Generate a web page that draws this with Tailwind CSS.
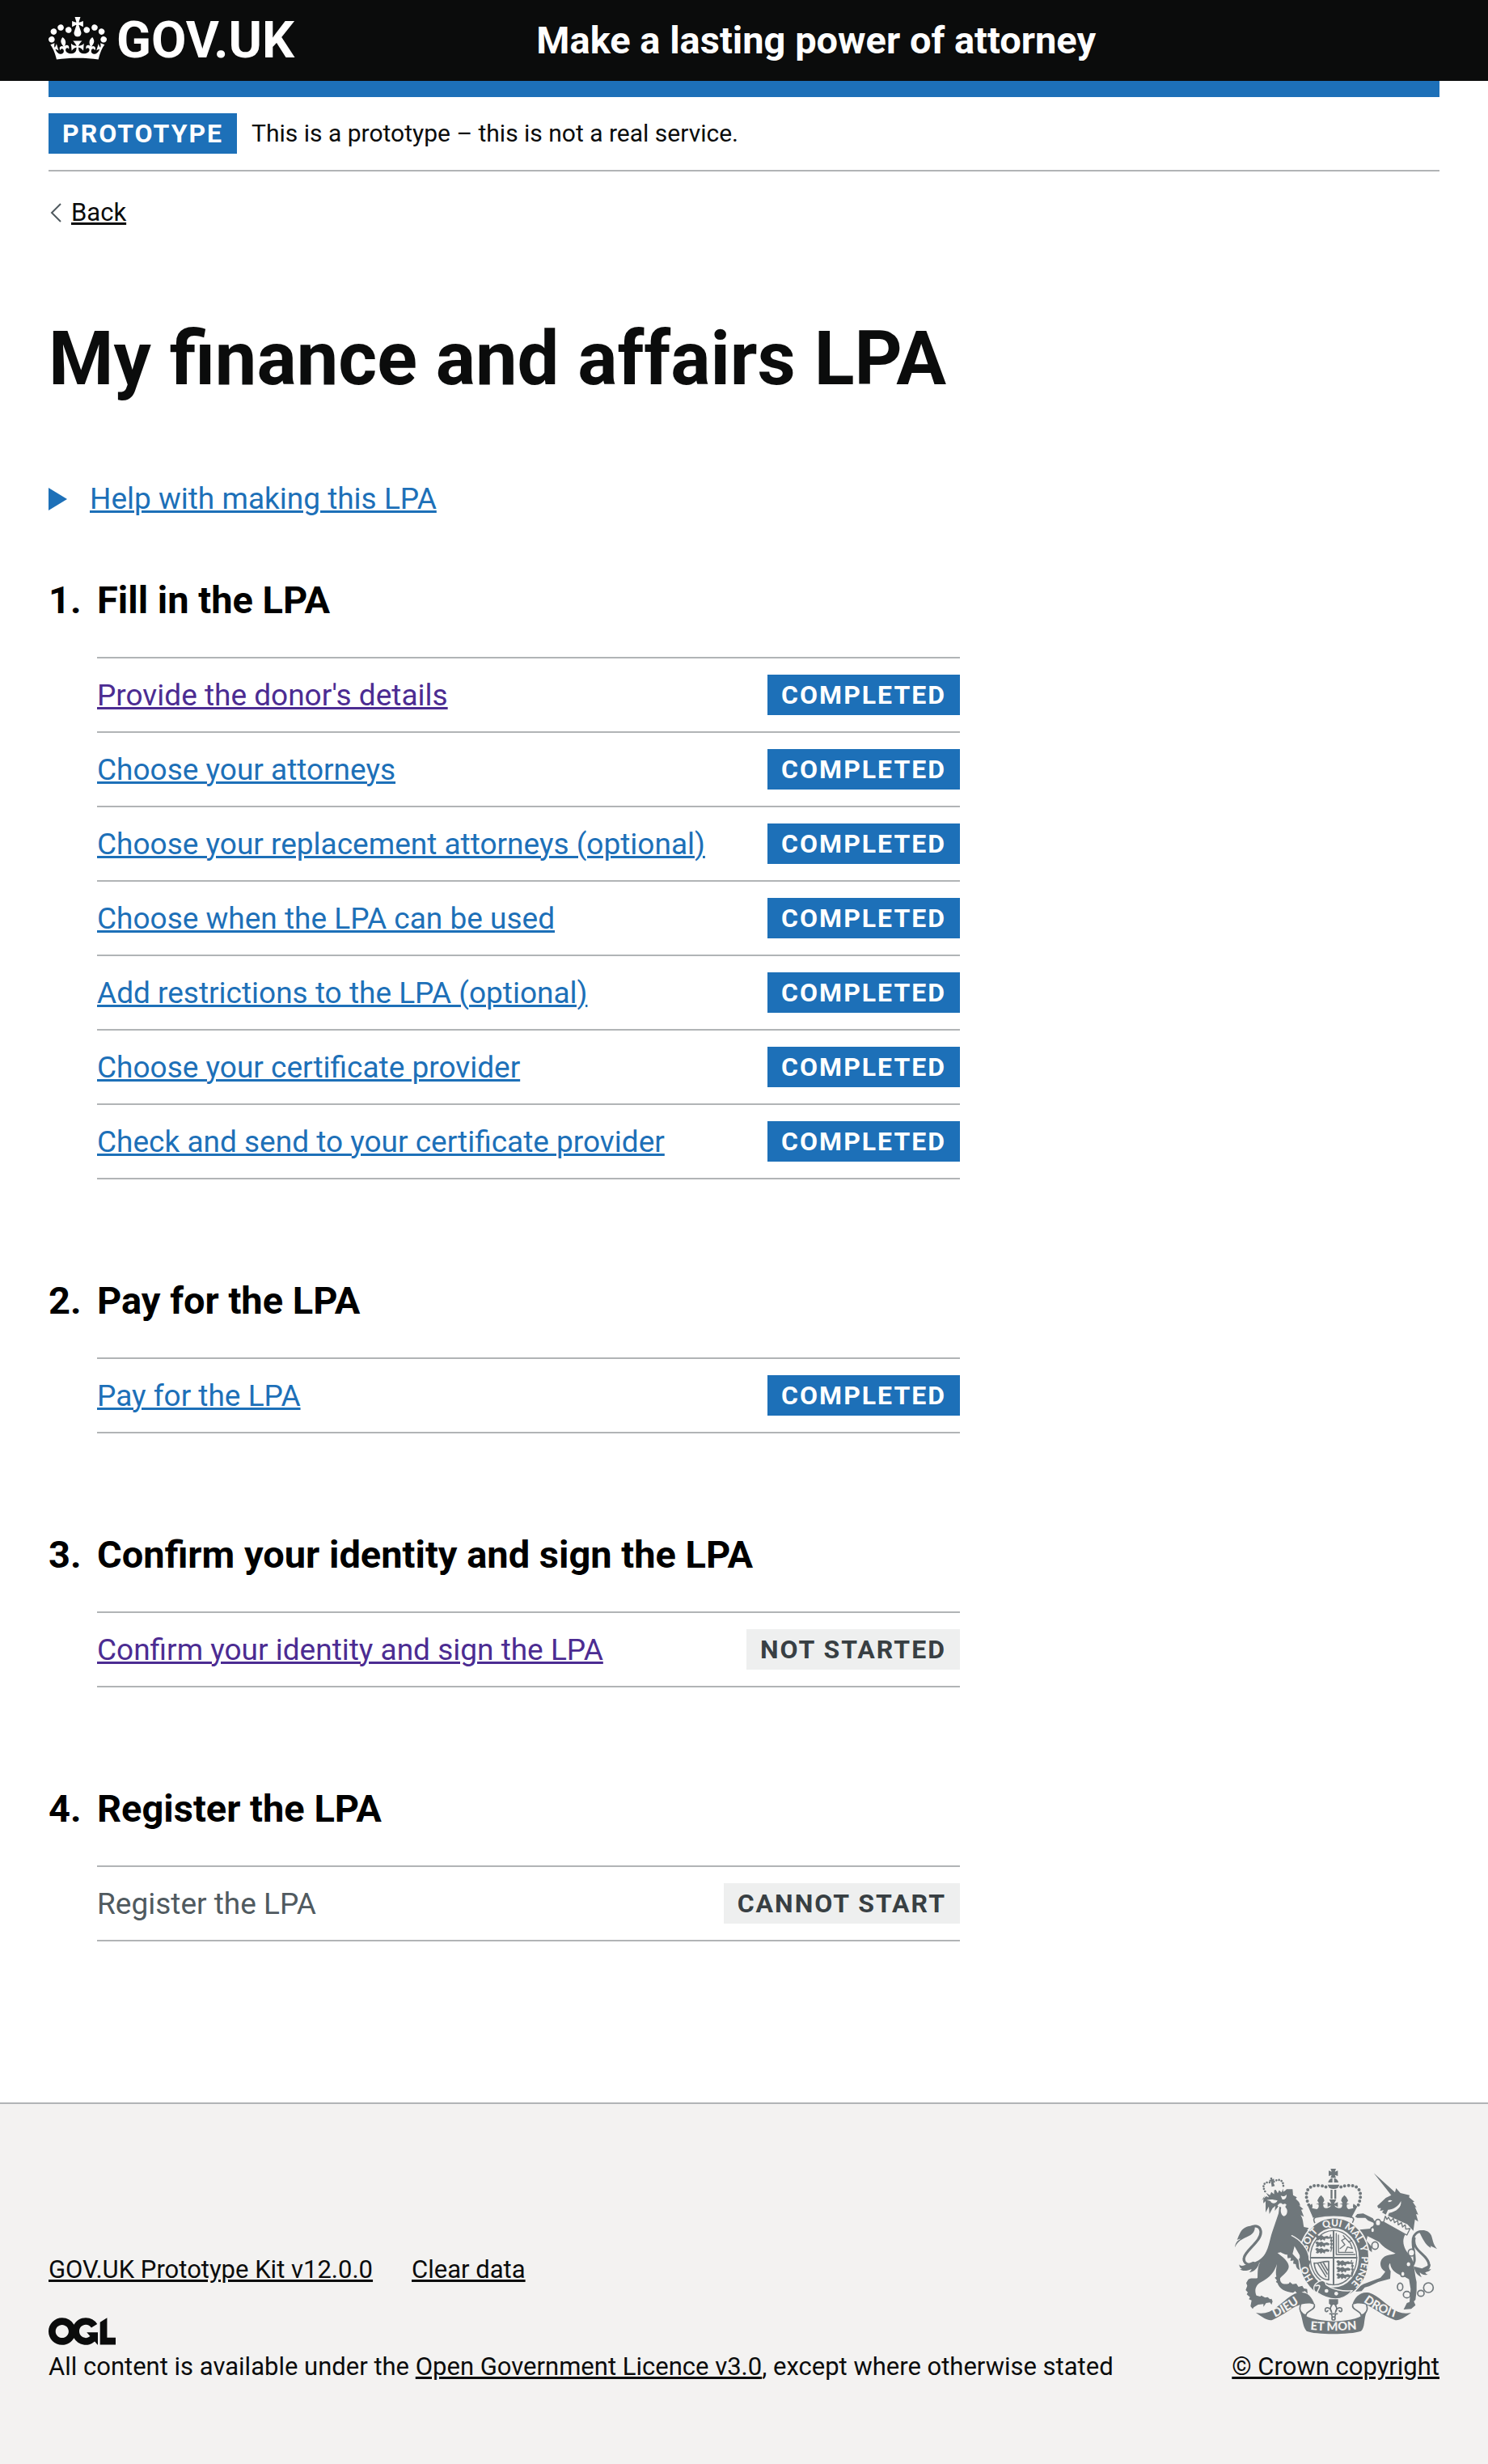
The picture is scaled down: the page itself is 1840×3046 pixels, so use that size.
<!DOCTYPE html>
<html lang="en">
<head>
<meta charset="utf-8">
<meta name="viewport" content="width=device-width, initial-scale=1">
<title>My finance and affairs LPA - Make a lasting power of attorney</title>
<script src="https://cdn.jsdelivr.net/npm/@tailwindcss/browser@4"></script>
</head>
<body class="flex min-h-screen flex-col bg-white font-[Roboto,sans-serif] text-[31px] leading-[42px] text-[#0b0c0c]">

<header class="bg-[#0b0c0c] text-white">
  <div class="mx-auto max-w-[1920px] px-[60px]">
    <div class="flex min-h-[100px] items-start pt-[21px]">
      <a href="#" class="flex w-1/3 items-start gap-3 text-[63px] leading-[58px] font-bold">
        <svg class="h-[53px] w-[72px] shrink-0" viewBox="0 0 132 97" aria-hidden="true"><path fill="currentColor" fill-rule="evenodd" d="M25 30.2c3.5 1.5 7.7-.2 9.1-3.7 1.5-3.6-.2-7.8-3.9-9.2-3.6-1.4-7.6.3-9.1 3.9-1.4 3.5.3 7.5 3.9 9zM9 39.5c3.6 1.5 7.8-.2 9.2-3.7 1.5-3.6-.2-7.8-3.9-9.1-3.6-1.5-7.6.2-9.1 3.8-1.4 3.5.3 7.5 3.8 9zM4.4 57.2c3.5 1.5 7.7-.2 9.1-3.8 1.5-3.6-.2-7.7-3.9-9.1-3.5-1.5-7.6.3-9.1 3.8-1.4 3.5.3 7.6 3.9 9.1zm38.3-21.4c3.5 1.5 7.7-.2 9.1-3.8 1.5-3.6-.2-7.7-3.9-9.1-3.6-1.5-7.6.3-9.1 3.8-1.3 3.6.4 7.7 3.9 9.1zm64.4-5.6c-3.6 1.5-7.8-.2-9.1-3.7-1.5-3.6.2-7.8 3.8-9.2 3.6-1.4 7.7.3 9.2 3.9 1.3 3.5-.4 7.5-3.9 9zm15.9 9.3c-3.6 1.5-7.7-.2-9.1-3.7-1.5-3.6.2-7.8 3.7-9.1 3.6-1.5 7.7.2 9.2 3.8 1.5 3.5-.3 7.5-3.8 9zm4.7 17.7c-3.6 1.5-7.8-.2-9.2-3.8-1.5-3.6.2-7.7 3.9-9.1 3.6-1.5 7.7.3 9.2 3.8 1.3 3.5-.4 7.6-3.9 9.1zM89.3 35.8c-3.6 1.5-7.8-.2-9.2-3.8-1.4-3.6.2-7.7 3.9-9.1 3.6-1.5 7.7.3 9.2 3.8 1.4 3.6-.3 7.7-3.9 9.1zM69.7 17.7l8.9 4.7V9.3l-8.9 2.8c-.2-.3-.5-.6-.9-.9L72.4 0H59.6l3.5 11.2c-.3.3-.6.5-.9.9l-8.8-2.8v13.1l8.8-4.7c.3.3.6.7.9.9l-5 15.4v.1c-.2.8-.4 1.6-.4 2.4 0 4.1 3.1 7.5 7 8.1h.2c.3 0 .7.1 1 .1.4 0 .7 0 1-.1h.2c4-.6 7.1-4.1 7.1-8.1 0-.8-.1-1.7-.4-2.4V34l-5.1-15.4c.4-.2.7-.6 1-.9zM66 92.8c16.9 0 32.8 1.1 47.1 3.2 4-16.9 8.9-26.7 14-33.5l-9.6-3.4c1 4.9 1.1 7.2 0 10.2-1.5-1.4-3-4.3-4.2-8.7L108.6 76c2.8-2 5-3.2 7.5-3.3-4.4 9.4-10 11.9-13.6 11.2-4.3-.8-6.3-4.6-5.6-7.9 1-4.7 5.7-5.9 8-.5 4.3-8.7-3-11.4-7.6-8.8 7.1-7.2 7.9-13.5 2.1-21.1-8 6.1-8.1 12.3-4.5 20.8-4.7-5.4-12.1-2.5-9.5 6.2 3.4-5.2 7.9-2 7.2 3.1-.6 4.3-6.4 7.8-13.5 7.2-10.3-.9-10.9-8-11.2-13.8 2.5-.5 7.1 1.8 11 7.3L80.2 60c-4.1 4.4-8 5.3-12.3 5.4 1.4-4.4 8-11.6 8-11.6H55.5s6.4 7.2 7.9 11.6c-4.2-.1-8-1-12.3-5.4l1.4 16.4c3.9-5.5 8.5-7.7 10.9-7.3-.3 5.8-.9 12.8-11.1 13.8-7.2.6-12.9-2.9-13.5-7.2-.7-5 3.8-8.3 7.1-3.1 2.7-8.7-4.6-11.6-9.4-6.2 3.7-8.5 3.6-14.7-4.6-20.8-5.8 7.6-5 13.9 2.2 21.1-4.7-2.6-11.9.1-7.7 8.8 2.3-5.5 7.1-4.2 8.1.5.7 3.3-1.3 7.1-5.7 7.9-3.5.7-9-1.8-13.5-11.2 2.5.1 4.7 1.3 7.5 3.3l-4.7-15.4c-1.2 4.4-2.7 7.2-4.3 8.7-1.1-3-.9-5.3 0-10.2l-9.5 3.4c5 6.9 9.9 16.7 14 33.5 14.8-2.1 30.8-3.2 47.7-3.2z"/></svg>
        <span>GOV.UK</span>
      </a>
      <a href="#" class="pl-[30px] text-[47px] leading-[58px] font-bold">Make a lasting power of attorney</a>
    </div>
  </div>
</header>

<div class="mx-auto w-full max-w-[1920px] px-[60px]">
  <div class="h-5 bg-[#1d70b8]"></div>
  <div class="flex items-center gap-[18px] border-b-2 border-[#b1b4b6] py-5">
    <strong class="bg-[#1d70b8] px-[17px] text-[32px] leading-[50px] font-bold tracking-[2px] text-white">PROTOTYPE</strong>
    <span class="text-[30px]">This is a prototype – this is not a real service.</span>
  </div>
  <a href="#" class="mt-[33px] flex w-fit items-center leading-9">
    <svg class="mr-[12px] ml-[2px] h-6 w-[14px]" viewBox="0 0 14 24" fill="none" stroke="#505a5f" stroke-width="2" aria-hidden="true"><path d="M13 1 2 12l11 11"/></svg>
    <span class="underline decoration-[3px] underline-offset-2">Back</span>
  </a>

  <main class="max-w-[1127px]">
    <h1 class="mt-[113px] text-[92px] leading-[100px] font-bold">My finance and affairs LPA</h1>

    <details class="mt-[98px]">
      <summary class="flex w-fit cursor-pointer list-none items-center gap-7 text-[37px] leading-[50px] text-[#1d70b8]">
        <svg class="h-7 w-[23px]" viewBox="0 0 23 28" fill="currentColor" aria-hidden="true"><path d="M0 0l23 14L0 28z"/></svg>
        <span class="underline decoration-[3px] underline-offset-2">Help with making this LPA</span>
      </summary>
      <p>Get help with making this LPA.</p>
    </details>

    <ol class="mt-[75px] flex flex-col gap-[125px]">
      <li>
        <h2 class="flex text-[47px] leading-[50px] font-bold text-black"><span class="w-[60px]">1.</span>Fill in the LPA</h2>
        <ul class="mt-[45px] ml-[60px] border-t-2 border-[#b1b4b6] text-[37px] text-[#1d70b8]">
          <li class="flex items-center justify-between border-b-2 border-[#b1b4b6] py-5"><a href="#" class="pt-[2px] text-[#4c2c92] underline decoration-[3px] underline-offset-2">Provide the donor's details</a><strong class="bg-[#1d70b8] px-[17px] text-[32px] leading-[50px] font-bold tracking-[2px] text-white">COMPLETED</strong></li>
          <li class="flex items-center justify-between border-b-2 border-[#b1b4b6] py-5"><a href="#" class="pt-[2px] underline decoration-[3px] underline-offset-2">Choose your attorneys</a><strong class="bg-[#1d70b8] px-[17px] text-[32px] leading-[50px] font-bold tracking-[2px] text-white">COMPLETED</strong></li>
          <li class="flex items-center justify-between border-b-2 border-[#b1b4b6] py-5"><a href="#" class="pt-[2px] underline decoration-[3px] underline-offset-2">Choose your replacement attorneys (optional)</a><strong class="bg-[#1d70b8] px-[17px] text-[32px] leading-[50px] font-bold tracking-[2px] text-white">COMPLETED</strong></li>
          <li class="flex items-center justify-between border-b-2 border-[#b1b4b6] py-5"><a href="#" class="pt-[2px] underline decoration-[3px] underline-offset-2">Choose when the LPA can be used</a><strong class="bg-[#1d70b8] px-[17px] text-[32px] leading-[50px] font-bold tracking-[2px] text-white">COMPLETED</strong></li>
          <li class="flex items-center justify-between border-b-2 border-[#b1b4b6] py-5"><a href="#" class="pt-[2px] underline decoration-[3px] underline-offset-2">Add restrictions to the LPA (optional)</a><strong class="bg-[#1d70b8] px-[17px] text-[32px] leading-[50px] font-bold tracking-[2px] text-white">COMPLETED</strong></li>
          <li class="flex items-center justify-between border-b-2 border-[#b1b4b6] py-5"><a href="#" class="pt-[2px] underline decoration-[3px] underline-offset-2">Choose your certificate provider</a><strong class="bg-[#1d70b8] px-[17px] text-[32px] leading-[50px] font-bold tracking-[2px] text-white">COMPLETED</strong></li>
          <li class="flex items-center justify-between border-b-2 border-[#b1b4b6] py-5"><a href="#" class="pt-[2px] underline decoration-[3px] underline-offset-2">Check and send to your certificate provider</a><strong class="bg-[#1d70b8] px-[17px] text-[32px] leading-[50px] font-bold tracking-[2px] text-white">COMPLETED</strong></li>
        </ul>
      </li>
      <li>
        <h2 class="flex text-[47px] leading-[50px] font-bold text-black"><span class="w-[60px]">2.</span>Pay for the LPA</h2>
        <ul class="mt-[45px] ml-[60px] border-t-2 border-[#b1b4b6] text-[37px] text-[#1d70b8]">
          <li class="flex items-center justify-between border-b-2 border-[#b1b4b6] py-5"><a href="#" class="pt-[2px] underline decoration-[3px] underline-offset-2">Pay for the LPA</a><strong class="bg-[#1d70b8] px-[17px] text-[32px] leading-[50px] font-bold tracking-[2px] text-white">COMPLETED</strong></li>
        </ul>
      </li>
      <li>
        <h2 class="flex text-[47px] leading-[50px] font-bold text-black"><span class="w-[60px]">3.</span>Confirm your identity and sign the LPA</h2>
        <ul class="mt-[45px] ml-[60px] border-t-2 border-[#b1b4b6] text-[37px] text-[#1d70b8]">
          <li class="flex items-center justify-between border-b-2 border-[#b1b4b6] py-5"><a href="#" class="pt-[2px] text-[#4c2c92] underline decoration-[3px] underline-offset-2">Confirm your identity and sign the LPA</a><strong class="bg-[#eeefef] px-[17px] text-[32px] leading-[50px] font-bold tracking-[2px] text-[#383f43]">NOT STARTED</strong></li>
        </ul>
      </li>
      <li>
        <h2 class="flex text-[47px] leading-[50px] font-bold text-black"><span class="w-[60px]">4.</span>Register the LPA</h2>
        <ul class="mt-[45px] ml-[60px] border-t-2 border-[#b1b4b6] text-[37px] text-[#505a5f]">
          <li class="flex items-center justify-between border-b-2 border-[#b1b4b6] py-5"><span class="pt-[2px]">Register the LPA</span><strong class="bg-[#eeefef] px-[17px] text-[32px] leading-[50px] font-bold tracking-[2px] text-[#383f43]">CANNOT START</strong></li>
        </ul>
      </li>
    </ol>
  </main>
</div>

<footer class="mt-[199px] flex-1 border-t-2 border-[#b1b4b6] bg-[#f3f2f1]">
  <div class="mx-auto flex max-w-[1920px] items-end justify-between gap-10 px-[60px] pt-20 pb-[98px]">
    <div>
      <ul class="flex gap-12">
        <li><a href="#" class="underline decoration-[3px] underline-offset-2">GOV.UK Prototype Kit v12.0.0</a></li>
        <li><a href="#" class="underline decoration-[3px] underline-offset-2">Clear data</a></li>
      </ul>
      <svg class="mt-[38px] h-[34px] w-[83px]" viewBox="0 0 483 196" fill="currentColor" role="img" aria-label="Open Government Licence"><path d="M421.5 142.8V.1l-50.7 32.3v161.1h112.4v-50.7zm-122.3-9.6A47.12 47.12 0 0 1 221 97.8c0-26 21.1-47.1 47.1-47.1 16.7 0 31.4 8.7 39.7 21.8l42.7-27.2A97.63 97.63 0 0 0 268.1 0c-36.5 0-68.3 20.1-85.1 49.7A98 98 0 0 0 97.8 0C43.9 0 0 43.9 0 97.8s43.9 97.8 97.8 97.8c36.5 0 68.3-20.1 85.1-49.7a97.76 97.76 0 0 0 149.6 25.4l19.4 22.2h3v-87.8h-80l24.3 27.5zM97.8 145c-26 0-47.1-21.1-47.1-47.1s21.1-47.1 47.1-47.1 47.1 21.1 47.1 47.1S123.8 145 97.8 145"/></svg>
      <p class="mt-[6px]">All content is available under the <a href="#" class="underline decoration-[3px] underline-offset-2">Open Government Licence v3.0</a>, except where otherwise stated</p>
    </div>
    <a href="#" class="flex shrink-0 flex-col items-center gap-5">
      <svg class="h-[204px] w-[250px] overflow-visible" viewBox="72 62 750 612" fill="#6f777b" stroke-linejoin="round" stroke-linecap="round" aria-hidden="true">
        <defs>
          <path id="garter" d="M440 513a102 119 0 0 1 0-238a102 119 0 0 1 0 238"/>
          <path id="dieu" d="M208 618Q258 598 322 552"/>
          <path id="droit" d="M546 552Q600 596 674 616"/>
          <path id="etmon" d="M340 658Q438 668 536 656"/>
          <g id="lions"><path d="M0 4q8-8 14 0l10-4 8 6 12-3 10 5-4 6-12-1-3 8-7-5-8 6-3-7-7 5-8-2 4-6zM0 28q8-8 14 0l10-4 8 6 12-3 10 5-4 6-12-1-3 8-7-5-8 6-3-7-7 5-8-2 4-6zM0 52q8-8 14 0l10-4 8 6 12-3 10 5-4 6-12-1-3 8-7-5-8 6-3-7-7 5-8-2 4-6z"/><path d="M57 0l-3 12 8-4-5 14 6-3-6 16 6-3-6 16 5-2-4 14" fill="none" stroke="#6f777b" stroke-width="4"/></g>
        </defs>

        <!-- lion's tail -->
        <path fill="none" stroke="#6f777b" stroke-width="10" d="M190 380C150 430 100 425 106 392c4-28 66-62 62-98-3-22-24-24-42-12"/>
        <path d="M72 354c2-22 14-28 22-32-6 0-10 2-14 4 8-18 14-42 36-49 10-4 20-1 28-5 6 14-2 28-14 36-18 12-44 14-58 46zM108 420c-10 4-16 2-20-3 0 8 4 14 10 16-4 2-6 2-8 2 10 8 30 6 44-1-2 6-6 10-10 12 20 0 32-16 38-32l-22-8z"/>
        <!-- lion -->
        <path d="M171 180l17-16 8 4c22-6 44-14 62-24l6-6 22 0 2 22 14 8-4 6c8 8 16 14 16 26l-6-4 18 16-8 2 10 26-12-6c10 16 8 26 12 44l18 4-6 8c6 2 6 8 0 12-8 12-16 24-22 34l-22 2-10 40 22 24c8 12 10 30 4 36-10-4-14-14-14-22l-10-2 2-12-12 2 2-12-12 2-2-14c-8 2-16-4-24-8l-12 2c20 16 42 32 42 52-2 18-24 32-32 42-2 16 10 26 32 20l4-6 10 8 14-2 8 12 14-4 6 10 12 2 2 18-10-10-12 4 10 8-4 14-10-16-14-2-6-8-8 6c-28-2-52-14-58-36l-6-4 4-6-8-10 6-4c-4-16 0-32 2-46-10 30-24 48-62 68-22 14-20 36-14 48l14 4 4-4 14 8 10-2 8 8 6-2 4 10-4 12-6-8-14 2-10 14 0-10-20 2-16 10-4 6-8-10 4-22-10-4 4-8-12-10 4-8-8-8 6-16-4-10 8-14c10-8 30 0 34-6 2-18-4-42 20-76 22-28 24-62 34-92l24-70 4-32-18 22 2-18-10 8-12 22-2-28-12 22 0-42-8 8c-2-14 2-22 6-30z"/>
        <path fill="#f3f2f1" d="M190 178c16-4 26-2 40 2-4 12-22 14-26 2zM242 162c10 4 16 2 22-4 0 12-6 20-16 18zM230 200c4-12 14-14 20-6 8-4 12-2 14 4-6 0-4 6-4 8 10 6 8 30-6 32-12-4-14-22-10-32-4-4-10-4-14-6z"/>
        <!-- lion's crown -->
        <g transform="translate(215 130) rotate(-14)">
          <path d="M-32 14l8 22q26-6 52 0l6-22-10 12-6-10-8 10-4-14-6 0-4 14-8-10-8 10z"/>
          <path fill="none" stroke="#6f777b" stroke-width="8" stroke-dasharray="0 10" d="M-34 8C-44-30-10-26 0-14 10-26 46-28 36 8"/>
          <path d="M-4-36h8l-1 8 6-2v8l-6-1 3 20H-6l3-20-6 1v-8l6 2z"/>
        </g>

        <!-- central crown -->
        <path d="M427 62h20l-4 11 11-4v20l-11-4 4 11h-20l4-11-11 4V69l11 4zM418 113q2-14 16-16v16zM440 113V97q14 2 16 16zM416 121h44l-6 12q-16 8-32 0zM427 140h7v34h-7zM441 140h7v34h-7z"/>
        <path fill="none" stroke="#6f777b" stroke-width="12" stroke-dasharray="0 14.5" d="M346 196C322 140 352 122 382 124c18 2 30 4 40 12M530 196c22-56-6-74-36-72-18 2-30 4-40 12"/>
        <path d="M344 202l14-10q4 12 0 16l18 4q10-6 6-18l-10-2 12-2-6-10q4-14 14-20 10 8 12 20l-6 10 12 2-10 2q-2 16 14 14 12-2 14-10l-12 6v-18l14 6-8-16h26l-8 16 14-6v18l-12-6q2 8 14 10 16 2 14-14l-10-2 12-2-6-10q2-12 12-20 10 6 14 20l-6 10 12 2-10 2q-4 12 6 18l18-4q-4-4 0-16l14 10-22 42q-66-22-142 0z"/>
        <path fill="none" stroke="#6f777b" stroke-width="5" d="M368 262q-8-16 4-20 66-14 134 0 12 4 2 20"/>

        <!-- unicorn -->
        <path fill="none" stroke="#6f777b" stroke-width="9" d="M716 428c48-10 2-84 20-116 14-24 34-18 40-8M738 320c-10 48 52 60 54 98 0 16-12 24-22 26"/>
        <path d="M754 292c20-6 38 0 46 16 6 14 6 32 22 52-10-6-18-8-24-12 2 8 0 8-2 6-18-12-26-30-42-62zM798 416c0 10-4 16-10 20l12-2c-6 10-16 10-22 12 2 6 6 8 10 8-14 6-24-2-30-8 0 8 4 14 8 18-18-6-26-20-30-40l30 8z"/>
        <path d="M587 78l82 74-14 12zM600 200l32-30 20-10 14-10 4-16 16 18 34 8-2 8 20 16-6 2 14 20-6-2 12 28-8-2 8 28-12-8-6 42-22-24-72-32 4-10c26-4 48-22 44-44-10 22-32 32-48 32l-8 18-14-8 6-8-14 2 4-10-10 0z"/>
        <path fill="#f3f2f1" d="M640 182q6-6 16-2-4 6-14 6z"/>
        <path d="M624 258l80 48c-18 30 2 62 20 82 14 18 12 50 22 94v32l-4 34-6 6 6 14-16 14-28 2 12-24 10-4 4-48-6-36c-20-16-66-18-70-60-8 8-4 20 2 30l-2 28-44 12-34 16-16 4-12 14-22 2 6-14 22-14 64-24 12-14 6-8c-26-16-24-50 6-60 12-4 24-4 32-8-20-10-44-20-60-42l-20-10-24-12-4 16 20 24 0 20-14-12-24-10 6-8-16-22 6-22-10 0 8-10 40-4c6-10 14-10 10-22l-20-8-10-10-30 0-8-4 8-10 22-2 36 18c8 18 18 20 24 10z"/>
        <path fill="#f3f2f1" stroke="#6f777b" stroke-width="4" d="M630 238l6 12 6-8 8 14 10-10 4 16 12-8 2 16 12-8 4 16 10-8 2 16 16-2-12 24-86-48z"/>
        <g fill="#f3f2f1" stroke="#6f777b" stroke-width="5"><ellipse cx="603" cy="262" rx="10" ry="12"/><ellipse cx="583" cy="289" rx="7" ry="10"/><ellipse cx="592" cy="347" rx="12" ry="14"/><ellipse cx="727" cy="373" rx="12" ry="13"/><ellipse cx="716" cy="416" rx="9" ry="10"/><ellipse cx="695" cy="452" rx="8" ry="10"/><ellipse cx="685" cy="500" rx="10" ry="14"/><ellipse cx="710" cy="529" rx="13" ry="12"/><ellipse cx="762" cy="524" rx="12" ry="11"/><circle cx="790" cy="503" r="18"/></g>

        <!-- garter and shield -->
        <ellipse cx="440" cy="394" rx="130" ry="150" stroke="#f3f2f1" stroke-width="5"/>
        <ellipse cx="438" cy="392" rx="94" ry="110" fill="#f3f2f1"/>
        <ellipse cx="438" cy="392" rx="86" ry="101" fill="none" stroke="#6f777b" stroke-width="4"/>
        <path d="M435 290h6v204h-6zM350 389h176v6H350z"/>
        <use href="#lions" x="370" y="308"/><use href="#lions" x="448" y="402"/>
        <path fill="none" stroke="#6f777b" stroke-width="4" d="M448 302v78h70M456 308v64h54M462 358l18-14-12-16 14-8 18 18 8 20-18-6-8 16M482 320l-8-10M494 334l12-6"/>
        <path fill="none" stroke="#6f777b" stroke-width="5" d="M366 412c20 2 30-8 54-6v68c-22 0-50-20-54-62zM380 414l30 48M390 412l24 40M400 410l16 28"/>
        <g fill="#f3f2f1" font-family="Lato, sans-serif" font-weight="900" font-size="36" text-anchor="middle">
          <text><textPath href="#garter" startOffset="17%">HO</textPath></text>
          <text><textPath href="#garter" startOffset="35%">SOIT</textPath></text>
          <text><textPath href="#garter" startOffset="49%">QUI</textPath></text>
          <text><textPath href="#garter" startOffset="61%">MAL</textPath></text>
          <text><textPath href="#garter" startOffset="70%">Y</textPath></text>
          <text><textPath href="#garter" startOffset="82%">PENSE</textPath></text>
        </g>
        <path stroke="#f3f2f1" stroke-width="4" d="M376 486c14-14 32-12 34 6 24 18 62 26 98 22-40 44-86 36-130 8-18-4-16-28-2-36z"/>
        <g fill="#f3f2f1"><circle cx="412" cy="515" r="7"/><circle cx="448" cy="525" r="7"/></g>
        <path fill="none" stroke="#f3f2f1" stroke-width="5" d="M372 496q20-6 12 10t-6 14"/>
        <!-- lion's foreleg, in front of the garter -->
        <path d="M283 312c28 14 60 46 64 90l6 4-6 16-10-10-6 14-10-14-6 6-6-22 8-2-4-10c-8-14-16-30-24-40z"/>
        <path d="M283 310c30 14 62 46 66 90" fill="none" stroke="#f3f2f1" stroke-width="4"/>

        <!-- fleur-de-lis -->
        <path d="M421 546h34v16l-9 8-8-12-8 12-9-8z"/>
        <path fill="none" stroke="#6f777b" stroke-width="5" d="M438 560c-16 14-14 24-7 34-4-20-26-22-24-6 2 6 8 4 10 0M438 560c16 14 14 24 7 34 4-20 26-22 24-6-2 6-8 4-10 0M424 600h28M431 604l3 10M445 604l-3 10"/>
        <circle cx="438" cy="617" r="6" fill="none" stroke="#6f777b" stroke-width="5"/>

        <!-- scroll -->
        <path d="M150 596q26 6 50-4c40-18 70-62 106-70 34-6 50 12 62 44-12-6-30-6-44-2-36 6-70 42-112 58-14 6-34-6-62-26zM726 596q-26 6-50-4c-38-18-70-60-106-70-34-6-54 18-62 44 12-6 30-6 44-2 36 12 68 44 112 58 14 6 34-6 62-26z"/>
        <path d="M312 588c20 28 60 36 126 40 66-2 106-12 124-40-14 36-6 62-22 76-40 14-170 14-202 0-16-18-12-40-26-76z"/>
        <path fill="none" stroke="#6f777b" stroke-width="5" d="M316 566c-8 20 2 34 20 40 0-20 36-18 31-40M560 566c8 20-2 34-20 40 0-20-36-18-31-40"/>
        <g fill="#f3f2f1" font-family="Lato, sans-serif" font-weight="900" text-anchor="middle">
          <text font-size="44"><textPath href="#dieu" startOffset="50%">DIEU</textPath></text>
          <text font-size="44"><textPath href="#droit" startOffset="50%">DROIT</textPath></text>
          <text font-size="44"><textPath href="#etmon" startOffset="50%">ET MON</textPath></text>
        </g>
      </svg>
      <span class="underline decoration-[3px] underline-offset-2">© Crown copyright</span>
    </a>
  </div>
</footer>
</body>
</html>
